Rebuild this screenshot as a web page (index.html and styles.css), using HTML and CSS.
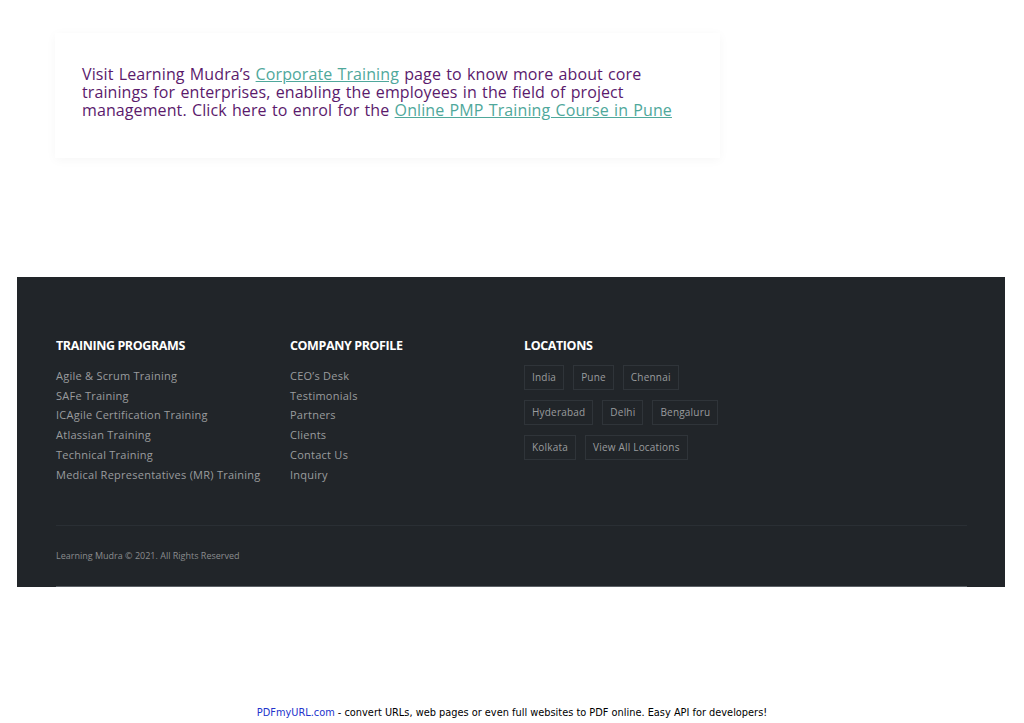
FILE: index.html
```html
<!DOCTYPE html>
<html>
<head>
	<meta charset="utf-8" />
	<title>Learning Mudra</title>
	<link rel="stylesheet" href="styles.css">
</head>
<body>
<div class="card">
	<p class="intro">Visit Learning Mudra’s <a href="#">Corporate Training</a> page to know more about core trainings for enterprises, enabling the employees in the field of project management. Click here to enrol for the <a href="#">Online PMP Training Course in Pune</a></p>
</div>

<div class="footer">
	<div class="footer-inner">
		<div class="cols">
			<div class="col">
				<h4>TRAINING PROGRAMS</h4>
				<ul>
					<li><a href="#">Agile &amp; Scrum Training</a></li>
					<li><a href="#">SAFe Training</a></li>
					<li><a href="#">ICAgile Certification Training</a></li>
					<li><a href="#">Atlassian Training</a></li>
					<li><a href="#">Technical Training</a></li>
					<li><a href="#">Medical Representatives (MR) Training</a></li>
				</ul>
			</div>
			<div class="col">
				<h4>COMPANY PROFILE</h4>
				<ul>
					<li><a href="#">CEO’s Desk</a></li>
					<li><a href="#">Testimonials</a></li>
					<li><a href="#">Partners</a></li>
					<li><a href="#">Clients</a></li>
					<li><a href="#">Contact Us</a></li>
					<li><a href="#">Inquiry</a></li>
				</ul>
			</div>
			<div class="col col-loc">
				<h4>LOCATIONS</h4>
				<div class="tags">
					<a href="#" class="tag">India</a>
					<a href="#" class="tag">Pune</a>
					<a href="#" class="tag">Chennai</a>
				</div>
				<div class="tags">
					<a href="#" class="tag">Hyderabad</a>
					<a href="#" class="tag">Delhi</a>
					<a href="#" class="tag">Bengaluru</a>
				</div>
				<div class="tags">
					<a href="#" class="tag">Kolkata</a>
					<a href="#" class="tag">View All Locations</a>
				</div>
			</div>
		</div>
		<div class="copy">Learning Mudra © 2021. All Rights Reserved</div>
	</div>
</div>

<div class="pdfnote"><a href="#">PDFmyURL.com</a> - convert URLs, web pages or even full websites to PDF online. Easy API for developers!</div>
</body>
</html>
```

FILE: styles.css
```css
body {
	margin: 0;
	background-color: #fff;
	font-family: "Open Sans", sans-serif;
}
.card {
	width: 665px;
	margin-left: 55px;
	margin-top: 33px;
	height: 125px;
	box-sizing: border-box;
	padding: 32px 27px 0 27px;
	box-shadow: 0 2px 10px rgba(0, 0, 0, 0.04);
}
.intro {
	margin: 0;
	width: 600px;
	font-size: 16px;
	line-height: 18px;
	color: #5b1a6c;
	letter-spacing: 0.1px;
	word-spacing: 1px;
}
.intro a {
	color: #4fa89b;
}
.footer {
	margin: 119px 0 0 17px;
	width: 988px;
	background-color: #212529;
}
.footer-inner {
	margin: 0 38px 0 39px;
	padding-top: 61px;
	border-bottom: 1px solid #5c6166;
}
.cols {
	display: flex;
	padding-bottom: 41px;
	border-bottom: 1px solid #2a2f34;
}
.col {
	width: 234px;
}
.col h4 {
	margin: 0 0 12px 0;
	font-size: 12.5px;
	line-height: 16px;
	font-weight: 700;
	color: #fff;
	letter-spacing: -0.4px;
}
.col ul {
	list-style: none;
	margin: 0;
	padding: 0;
}
.col li {
	line-height: 19.7px;
	font-size: 11px;
}
.col li a {
	color: #9a9c9e;
	text-decoration: none;
	letter-spacing: 0.25px;
}
.tags {
	display: flex;
	gap: 9px;
	margin-bottom: 10px;
}
.tags:first-of-type {
	margin-top: -1px;
}
.tag {
	display: block;
	border: 1px solid #2f3439;
	padding: 0 7px;
	height: 23px;
	line-height: 23px;
	font-size: 10px;
	color: #9a9c9e;
	text-decoration: none;
	letter-spacing: 0.2px;
}
.copy {
	padding: 23px 0 23px 0;
	font-size: 9px;
	line-height: 14px;
	color: #8a8c8e;
}
.pdfnote {
	margin-top: 120px;
	text-align: center;
	font-family: "DejaVu Sans", Verdana, sans-serif;
	font-size: 9.8px;
	color: #000;
}
.pdfnote a {
	color: #2233cc;
	text-decoration: none;
}
```
